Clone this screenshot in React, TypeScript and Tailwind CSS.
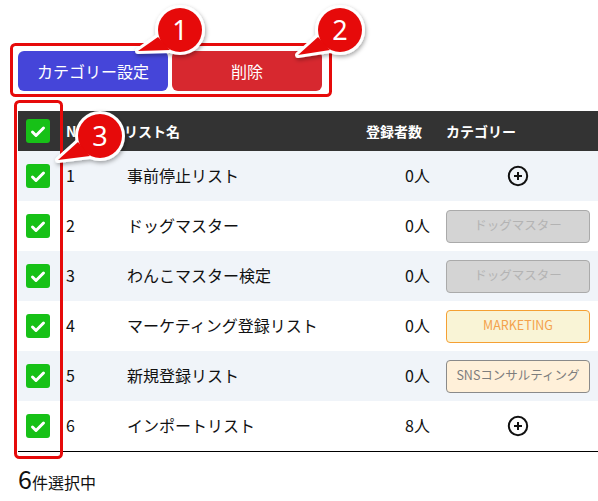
import React from "react";

const FONT = { fontFamily: '"Noto Sans CJK JP", "Noto Sans", sans-serif' };

type Cat = { kind: "plus" } | { kind: "dog" } | { kind: "mkt" } | { kind: "sns" };

const rows: { no: number; name: string; count: string; cat: Cat }[] = [
  { no: 1, name: "事前停止リスト", count: "0人", cat: { kind: "plus" } },
  { no: 2, name: "ドッグマスター", count: "0人", cat: { kind: "dog" } },
  { no: 3, name: "わんこマスター検定", count: "0人", cat: { kind: "dog" } },
  { no: 4, name: "マーケティング登録リスト", count: "0人", cat: { kind: "mkt" } },
  { no: 5, name: "新規登録リスト", count: "0人", cat: { kind: "sns" } },
  { no: 6, name: "インポートリスト", count: "8人", cat: { kind: "plus" } },
];

function Check() {
  return (
    <div className="w-6 h-6 rounded-[3px] bg-[#17c117] flex items-center justify-center">
      <svg width="24" height="24" viewBox="0 0 24 24">
        <path d="M6.5 13 L10 16.5 L17.5 9" fill="none" stroke="white" strokeWidth="3" strokeLinecap="round" strokeLinejoin="round" />
      </svg>
    </div>
  );
}

function PlusCircle() {
  return (
    <svg width="22" height="22" viewBox="0 0 22 22">
      <circle cx="11" cy="11" r="9.2" fill="none" stroke="#111" strokeWidth="2" />
      <path d="M11 7 V15 M7 11 H15" stroke="#111" strokeWidth="2" />
    </svg>
  );
}

function CatCell({ cat }: { cat: Cat }) {
  if (cat.kind === "plus") {
    return (
      <div className="w-[144px] flex justify-center">
        <PlusCircle />
      </div>
    );
  }
  const cls =
    cat.kind === "dog"
      ? "bg-[#d4d4d4] border-[#aaaaaa] text-[#b3b3b3]"
      : cat.kind === "mkt"
      ? "bg-[#f9f4d6] border-[#f5a033] text-[#f4a24c]"
      : "bg-[#fff0d9] border-[#8a8a8a] text-[#7d7d7d]";
  const label = cat.kind === "dog" ? "ドッグマスター" : cat.kind === "mkt" ? "MARKETING" : "SNSコンサルティング";
  return (
    <div className={`w-[144px] h-[33px] rounded-[4px] border flex items-center justify-center text-[12.5px] leading-none pb-px ${cls}`}>
      {label}
    </div>
  );
}

function Badge({ cx, cy, n, tail }: { cx: number; cy: number; n: string; tail: string }) {
  return (
    <g>
      <g filter="url(#sh)">
        <circle cx={cx} cy={cy} r={22} fill="white" stroke="white" strokeWidth={6} />
        <polygon points={tail} fill="white" stroke="white" strokeWidth={6} strokeLinejoin="round" />
      </g>
      <circle cx={cx} cy={cy} r={22} fill="#e60a0a" />
      <polygon points={tail} fill="#e60a0a" />
      <text
        x={cx}
        y={cy + 9.5}
        textAnchor="middle"
        fill="white"
        fontSize="27"
        style={{ fontFamily: '"Noto Sans", "Open Sans", sans-serif' }}
      >
        {n}
      </text>
    </g>
  );
}

export default function App() {
  return (
    <div className="relative w-[598px] h-[501px] bg-white overflow-hidden text-[#111]" style={FONT}>
      <div className="pt-[51px] pl-[18px] flex gap-1">
        <button className="w-[150px] h-10 rounded-[6px] bg-[#4545d9] text-white text-[16px] leading-none">
          カテゴリー設定
        </button>
        <button className="w-[150px] h-10 rounded-[6px] bg-[#d7282f] text-white text-[16px] leading-none">
          削除
        </button>
      </div>

      <div className="mt-5 ml-[18px] w-[580px]">
        <div className="grid grid-cols-[48px_61px_219px_100px_152px] h-10 items-center bg-[#333333] text-white text-[14px] font-bold leading-none">
          <div className="pl-2">
            <Check />
          </div>
          <div>No</div>
          <div className="-ml-[3px]">リスト名</div>
          <div className="text-right pr-6">登録者数</div>
          <div>カテゴリー</div>
        </div>
        {rows.map((r, i) => (
          <div
            key={r.no}
            className={`grid grid-cols-[48px_61px_219px_100px_152px] h-[50px] items-center text-[16px] leading-none ${
              i % 2 === 0 ? "bg-[#f0f4f9]" : "bg-white"
            }`}
          >
            <div className="pl-2">
              <Check />
            </div>
            <div className="pb-[3px]">{r.no}</div>
            <div className="pb-[3px]">{r.name}</div>
            <div className="text-right pr-4 pb-[3px]">{r.count}</div>
            <div>
              <CatCell cat={r.cat} />
            </div>
          </div>
        ))}
        <div className="h-px bg-black" />
      </div>

      <div className="pl-[18px] mt-[14px] flex items-baseline leading-none">
        <span className="text-[25px]">6</span>
        <span className="text-[16px]">件選択中</span>
      </div>

      <svg className="absolute inset-0 pointer-events-none" width="598" height="501" viewBox="0 0 598 501">
        <defs>
          <filter id="sh" x="-50%" y="-50%" width="200%" height="200%">
            <feDropShadow dx="1" dy="2" stdDeviation="2" floodColor="#000" floodOpacity="0.35" />
          </filter>
        </defs>
        <rect x="11.5" y="44.5" width="319" height="51" rx="4" fill="none" stroke="#e60a0a" strokeWidth="3" />
        <rect x="15.5" y="101.5" width="46" height="356" rx="4" fill="none" stroke="#e60a0a" strokeWidth="3" />
        <Badge cx={180} cy={30} n="1" tail="138,51 158,37 170,50" />
        <Badge cx={340} cy={30} n="2" tail="298,55 318,37 330,50" />
        <Badge cx={100} cy={136} n="3" tail="58,160 78,142 90,156" />
      </svg>
    </div>
  );
}
